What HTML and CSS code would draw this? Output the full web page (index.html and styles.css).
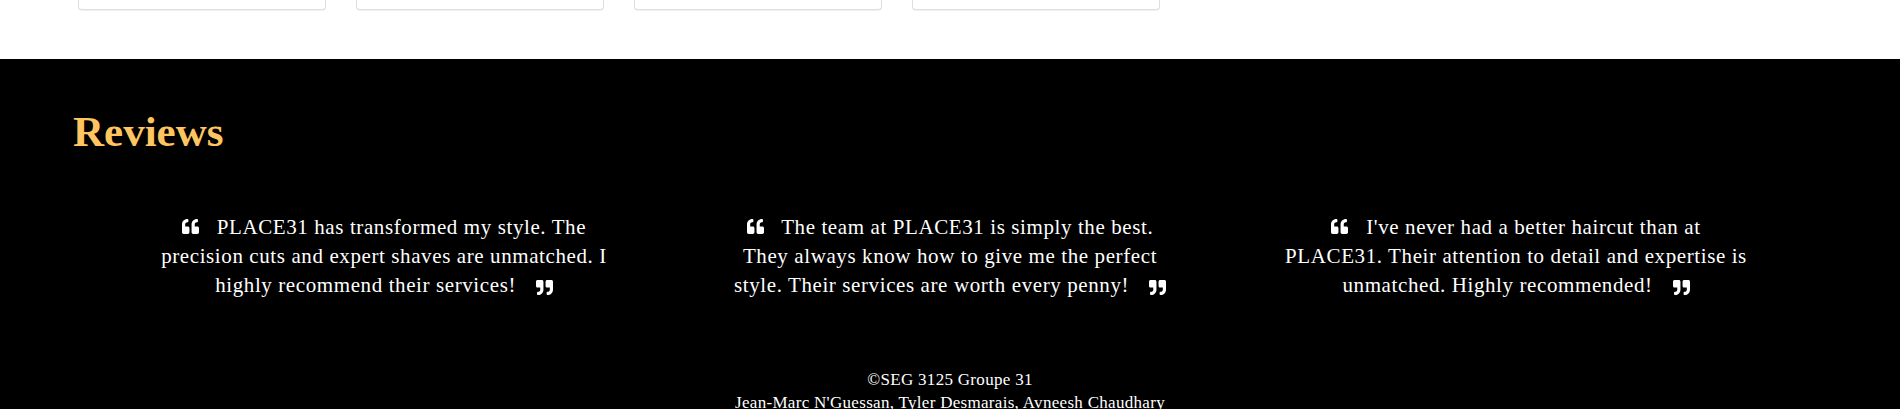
FILE: index.html
```html
<!DOCTYPE html>
<html lang="en">
<head>
<meta charset="utf-8">
<title>PLACE31 - Reviews</title>
<link rel="stylesheet" href="styles.css">
</head>
<body>
<section class="services">
  <div class="card-row">
    <div class="card"></div>
    <div class="card"></div>
    <div class="card"></div>
    <div class="card"></div>
  </div>
</section>
<section class="reviews">
  <h2 class="reviews-title">Reviews</h2>
  <div class="review-grid">
    <blockquote class="review">
      <svg class="q q-open" viewBox="0 32 512 448" aria-hidden="true"><path d="M464 256h-80v-64c0-35.3 28.7-64 64-64h8c13.3 0 24-10.7 24-24V56c0-13.3-10.7-24-24-24h-8c-88.4 0-160 71.6-160 160v240c0 26.5 21.5 48 48 48h128c26.5 0 48-21.5 48-48V304c0-26.5-21.5-48-48-48zm-288 0H96v-64c0-35.3 28.7-64 64-64h8c13.3 0 24-10.7 24-24V56c0-13.3-10.7-24-24-24h-8C71.6 32 0 103.6 0 192v240c0 26.5 21.5 48 48 48h128c26.5 0 48-21.5 48-48V304c0-26.5-21.5-48-48-48z"/></svg> PLACE31 has transformed my style. The<br>precision cuts and expert shaves are unmatched. I<br>highly recommend their services! <svg class="q q-close" viewBox="0 32 512 448" aria-hidden="true"><path d="M464 32H336c-26.5 0-48 21.5-48 48v128c0 26.5 21.5 48 48 48h80v64c0 35.3-28.7 64-64 64h-8c-13.3 0-24 10.7-24 24v48c0 13.3 10.7 24 24 24h8c88.4 0 160-71.6 160-160V80c0-26.5-21.5-48-48-48zm-288 0H48C21.5 32 0 53.5 0 80v128c0 26.5 21.5 48 48 48h80v64c0 35.3-28.7 64-64 64h-8c-13.3 0-24 10.7-24 24v48c0 13.3 10.7 24 24 24h8c88.4 0 160-71.6 160-160V80c0-26.5-21.5-48-48-48z"/></svg>
    </blockquote>
    <blockquote class="review">
      <svg class="q q-open" viewBox="0 32 512 448" aria-hidden="true"><path d="M464 256h-80v-64c0-35.3 28.7-64 64-64h8c13.3 0 24-10.7 24-24V56c0-13.3-10.7-24-24-24h-8c-88.4 0-160 71.6-160 160v240c0 26.5 21.5 48 48 48h128c26.5 0 48-21.5 48-48V304c0-26.5-21.5-48-48-48zm-288 0H96v-64c0-35.3 28.7-64 64-64h8c13.3 0 24-10.7 24-24V56c0-13.3-10.7-24-24-24h-8C71.6 32 0 103.6 0 192v240c0 26.5 21.5 48 48 48h128c26.5 0 48-21.5 48-48V304c0-26.5-21.5-48-48-48z"/></svg> The team at PLACE31 is simply the best.<br>They always know how to give me the perfect<br>style. Their services are worth every penny! <svg class="q q-close" viewBox="0 32 512 448" aria-hidden="true"><path d="M464 32H336c-26.5 0-48 21.5-48 48v128c0 26.5 21.5 48 48 48h80v64c0 35.3-28.7 64-64 64h-8c-13.3 0-24 10.7-24 24v48c0 13.3 10.7 24 24 24h8c88.4 0 160-71.6 160-160V80c0-26.5-21.5-48-48-48zm-288 0H48C21.5 32 0 53.5 0 80v128c0 26.5 21.5 48 48 48h80v64c0 35.3-28.7 64-64 64h-8c-13.3 0-24 10.7-24 24v48c0 13.3 10.7 24 24 24h8c88.4 0 160-71.6 160-160V80c0-26.5-21.5-48-48-48z"/></svg>
    </blockquote>
    <blockquote class="review">
      <svg class="q q-open" viewBox="0 32 512 448" aria-hidden="true"><path d="M464 256h-80v-64c0-35.3 28.7-64 64-64h8c13.3 0 24-10.7 24-24V56c0-13.3-10.7-24-24-24h-8c-88.4 0-160 71.6-160 160v240c0 26.5 21.5 48 48 48h128c26.5 0 48-21.5 48-48V304c0-26.5-21.5-48-48-48zm-288 0H96v-64c0-35.3 28.7-64 64-64h8c13.3 0 24-10.7 24-24V56c0-13.3-10.7-24-24-24h-8C71.6 32 0 103.6 0 192v240c0 26.5 21.5 48 48 48h128c26.5 0 48-21.5 48-48V304c0-26.5-21.5-48-48-48z"/></svg> I've never had a better haircut than at<br>PLACE31. Their attention to detail and expertise is<br>unmatched. Highly recommended! <svg class="q q-close" viewBox="0 32 512 448" aria-hidden="true"><path d="M464 32H336c-26.5 0-48 21.5-48 48v128c0 26.5 21.5 48 48 48h80v64c0 35.3-28.7 64-64 64h-8c-13.3 0-24 10.7-24 24v48c0 13.3 10.7 24 24 24h8c88.4 0 160-71.6 160-160V80c0-26.5-21.5-48-48-48zm-288 0H48C21.5 32 0 53.5 0 80v128c0 26.5 21.5 48 48 48h80v64c0 35.3-28.7 64-64 64h-8c-13.3 0-24 10.7-24 24v48c0 13.3 10.7 24 24 24h8c88.4 0 160-71.6 160-160V80c0-26.5-21.5-48-48-48z"/></svg>
    </blockquote>
  </div>
  <footer class="site-footer">
    <p class="footer-line">©SEG 3125 Groupe 31</p>
    <p class="footer-line">Jean-Marc N'Guessan, Tyler Desmarais, Avneesh Chaudhary</p>
  </footer>
</section>
</body>
</html>
```
FILE: styles.css
```css
html, body {
  margin: 0;
  padding: 0;
  background: #000;
}

body {
  font-family: "Liberation Serif", "Times New Roman", serif;
  color: #fff;
  overflow: hidden;
}

.services {
  background: #fff;
  padding: 0 0 49px;
}

.card-row {
  display: flex;
  gap: 30px;
  padding-left: 78px;
}

.card {
  width: 248px;
  height: 10px;
  box-sizing: border-box;
  background: #fff;
  border: 1px solid #dedede;
  border-top: none;
  border-radius: 0 0 4px 4px;
  box-shadow: 0 1px 1px rgba(0, 0, 0, 0.06);
}

.reviews {
  background: #000;
  padding: 48px 73px 0;
  min-height: 360px;
}

.reviews-title {
  margin: 0;
  font-size: 43px;
  line-height: 50px;
  font-weight: 700;
  color: #ffc560;
}

.review-grid {
  display: grid;
  grid-template-columns: repeat(3, 566px);
  justify-content: center;
  margin-top: 56px;
}

.review {
  margin: 0;
  text-align: center;
  font-size: 21px;
  line-height: 29px;
  letter-spacing: 0.6px;
  white-space: nowrap;
  color: #fff;
}

.q {
  width: 17px;
  height: 15px;
  fill: #fff;
}

.q-open {
  margin-right: 12px;
}

.q-close {
  margin-left: 14px;
  vertical-align: -3px;
}

.site-footer {
  margin-top: 68px;
  text-align: center;
}

.footer-line {
  margin: 0;
  font-size: 17px;
  line-height: 23px;
  letter-spacing: 0.3px;
}
```
